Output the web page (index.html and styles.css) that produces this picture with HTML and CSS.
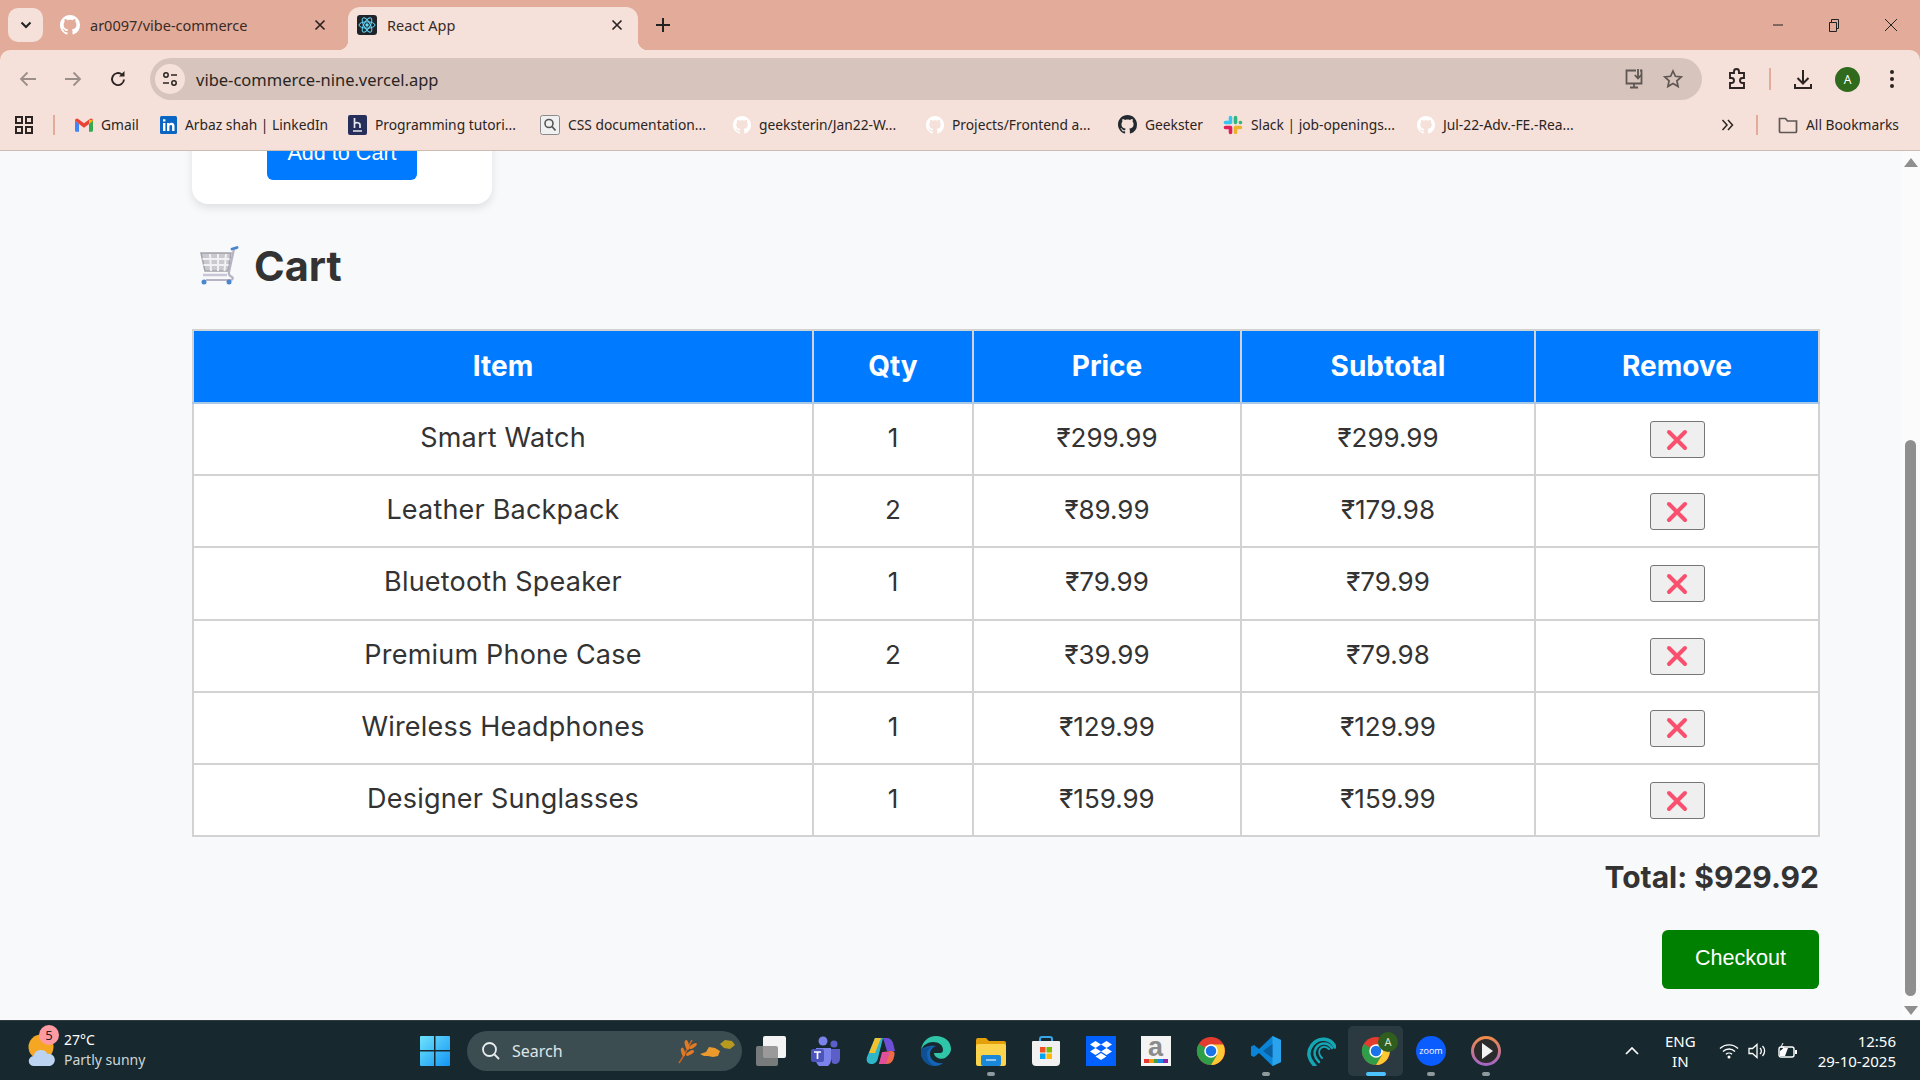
FILE: index.html
```html
<!DOCTYPE html>
<html lang="en">
  <head>
    <meta charset="UTF-8" />
    <title>React App</title>
    <link rel="stylesheet" href="styles.css">
  </head>
  <body>
    <svg class="defs" width="0" height="0">
      <symbol id="gh" viewBox="0 0 16 16"><path fill="currentColor" d="M8 0C3.58 0 0 3.58 0 8c0 3.54 2.29 6.53 5.47 7.59.4.07.55-.17.55-.38 0-.19-.01-.82-.01-1.49-2.01.37-2.53-.49-2.69-.94-.09-.23-.48-.94-.82-1.13-.28-.15-.68-.52-.01-.53.63-.01 1.08.58 1.23.82.72 1.21 1.87.87 2.33.66.07-.52.28-.87.51-1.07-1.78-.2-3.64-.89-3.64-3.95 0-.87.31-1.59.82-2.15-.08-.2-.36-1.02.08-2.12 0 0 .67-.21 2.2.82.64-.18 1.32-.27 2-.27s1.36.09 2 .27c1.53-1.04 2.2-.82 2.2-.82.44 1.1.16 1.92.08 2.12.51.56.82 1.27.82 2.15 0 3.07-1.87 3.75-3.65 3.95.29.25.54.73.54 1.48 0 1.07-.01 1.93-.01 2.2 0 .21.15.46.55.38A8.01 8.01 0 0 0 16 8c0-4.42-3.58-8-8-8z"/></symbol>
      <symbol id="remove" viewBox="0 0 22 22"><path d="M3 3l16 16M19 3L3 19" fill="none" stroke="#f9506f" stroke-width="4" stroke-linecap="round"/></symbol>
      <symbol id="close" viewBox="0 0 12 12"><path d="M1.5 1.5l9 9M10.500 1.500l-9 9" fill="none" stroke="currentColor" stroke-width="1.700"/></symbol>
      <symbol id="chrome" viewBox="0 0 32 32">
        <circle cx="16" cy="16" r="15" fill="#e33b2e"/>
        <path d="M16 16L3 8.500A15 15 0 0 0 16 31l6.500-11z" fill="#2e9e48"/>
        <path d="M16 9h13a15 15 0 0 1-13 22l6.500-11z" fill="#fcc934"/>
        <circle cx="16" cy="16" r="7.200" fill="#fff"/>
        <circle cx="16" cy="16" r="5.600" fill="#1a73e8"/>
      </symbol>
    </svg>

    <div class="window">
      <!-- Tabs -->
      <div class="tabstrip">
        <div class="tab-search">
          <svg width="12" height="8" viewBox="0 0 12 8"><path d="M1.500 1.500L6 6l4.500-4.500" fill="none" stroke="#222" stroke-width="2"/></svg>
        </div>
        <div class="tab tab-first">
          <svg class="tab-icon gh-white" width="20" height="20"><use href="#gh"/></svg>
          <span class="tab-title">ar0097/vibe-commerce</span>
          <svg class="tab-close" width="12" height="12"><use href="#close"/></svg>
        </div>
        <div class="tab tab-active">
          <svg class="tab-icon" width="20" height="20" viewBox="0 0 20 20">
            <rect width="20" height="20" rx="3" fill="#20232a"/>
            <g fill="none" stroke="#61dafb" stroke-width="1">
              <ellipse cx="10" cy="10" rx="8" ry="3.200"/>
              <ellipse cx="10" cy="10" rx="8" ry="3.200" transform="rotate(60 10 10)"/>
              <ellipse cx="10" cy="10" rx="8" ry="3.200" transform="rotate(120 10 10)"/>
            </g>
            <circle cx="10" cy="10" r="1.700" fill="#61dafb"/>
          </svg>
          <span class="tab-title">React App</span>
          <svg class="tab-close" width="12" height="12"><use href="#close"/></svg>
        </div>
        <svg class="new-tab" width="14" height="14" viewBox="0 0 14 14"><path d="M7 0v14M0 7h14" stroke="#222" stroke-width="2"/></svg>
        <div class="window-controls">
          <svg width="12" height="12" viewBox="0 0 12 12"><path d="M1 6h10" stroke="#222" stroke-width="1"/></svg>
          <svg width="14" height="14" viewBox="0 0 14 14"><path d="M2.500 4.500h7v9h-7zM4.500 4.500V1.500h7v9H9.500" fill="none" stroke="#222"/></svg>
          <svg width="14" height="14" viewBox="0 0 14 14"><path d="M1 1l12 12M13 1L1 13" stroke="#222" stroke-width="1"/></svg>
        </div>
      </div>

      <!-- Address bar -->
      <div class="toolbar">
        <svg class="nav-icon" width="18" height="16" viewBox="0 0 18 16"><path d="M17 8H2M8.500 1.500L2 8l6.500 6.500" fill="none" stroke="#9c8f8a" stroke-width="1.800"/></svg>
        <svg class="nav-icon" width="18" height="16" viewBox="0 0 18 16"><path d="M1 8h15M9.500 1.500L16 8l-6.500 6.500" fill="none" stroke="#9c8f8a" stroke-width="1.800"/></svg>
        <svg class="nav-icon" width="18" height="18" viewBox="0 0 18 18"><path d="M15 9.500A6 6 0 1 1 13 4.600" fill="none" stroke="#2b2422" stroke-width="1.900"/><path d="M15.500 1v5.500H10z" fill="#2b2422"/></svg>
        <div class="omnibox">
          <div class="site-info">
            <svg width="16" height="16" viewBox="0 0 16 16"><g fill="none" stroke="#2b2422" stroke-width="1.500"><circle cx="4" cy="4" r="2.200"/><path d="M9 4h6M1 12h6"/><circle cx="12" cy="12" r="2.200"/></g></svg>
          </div>
          <span class="url">vibe-commerce-nine.vercel.app</span>
          <svg class="omni-icon" width="22" height="22" viewBox="0 0 22 22"><path d="M13 2.500H3.500v13h15v-13H17M7 19.500h8M11 15.500v4" fill="none" stroke="#5f5754" stroke-width="1.800"/><path d="M15 1v9M11.800 7l3.200 3.400L18.200 7" fill="none" stroke="#5f5754" stroke-width="1.800"/></svg>
          <svg class="omni-icon" width="20" height="20" viewBox="0 0 20 20"><path d="M10 2l2.400 5.300 5.800.6-4.300 3.900 1.200 5.700L10 14.600l-5.100 2.900 1.200-5.700L1.800 7.900l5.800-.6z" fill="none" stroke="#5f5754" stroke-width="1.700"/></svg>
        </div>
        <svg class="tool-icon ext" width="20" height="22" viewBox="0 0 20 22"><path d="M3 5h4V3.500a2.500 2.500 0 0 1 5 0V5h5v5h-1.500a2.500 2.500 0 0 0 0 5H17v5H3v-5h1.500a2.500 2.500 0 0 0 0-5H3z" fill="none" stroke="#2b2422" stroke-width="1.900"/></svg>
        <span class="tool-divider"></span>
        <svg class="tool-icon dl" width="20" height="22" viewBox="0 0 20 22"><path d="M10 2v13M4.500 10l5.500 5.500 5.500-5.500M2 16v4h16v-4" fill="none" stroke="#2b2422" stroke-width="2"/></svg>
        <span class="avatar">A</span>
        <svg class="tool-icon menu" width="4" height="18" viewBox="0 0 4 18"><circle cx="2" cy="2" r="2" fill="#2b2422"/><circle cx="2" cy="9" r="2" fill="#2b2422"/><circle cx="2" cy="16" r="2" fill="#2b2422"/></svg>
      </div>

      <!-- Bookmarks -->
      <div class="bookmarks">
        <svg class="apps" width="18" height="18" viewBox="0 0 18 18"><g fill="none" stroke="#2b2422" stroke-width="2"><rect x="1" y="1" width="6" height="6"/><rect x="11" y="1" width="6" height="6"/><rect x="1" y="11" width="6" height="6"/><rect x="11" y="11" width="6" height="6"/></g></svg>
        <span class="bar-divider"></span>
        <div class="bookmark b-gmail">
          <svg width="18" height="14" viewBox="0 0 18 14"><path d="M0 2.500V12.500a1.200 1.200 0 0 0 1.200 1.200H4V6z" fill="#4285f4"/><path d="M18 2.500V12.500a1.200 1.200 0 0 1-1.200 1.200H14V6z" fill="#34a853"/><path d="M0 2.500a2 2 0 0 1 3.200-1.600L9 5.300l5.800-4.400A2 2 0 0 1 18 2.500L14 6V6L9 9.700 4 6z" fill="#ea4335"/><path d="M14 1.500L18 2.500 14 6z" fill="#fbbc04"/></svg>
          <span>Gmail</span>
        </div>
        <div class="bookmark b-linkedin">
          <svg width="17" height="18" viewBox="0 0 17 18"><rect width="17" height="18" rx="1.500" fill="#0a66c2"/><path d="M3 7h2.400v8H3zM3 3.200h2.400v2.300H3zM7 7h2.300v1.100c.5-.8 1.300-1.300 2.400-1.300 2 0 2.800 1.300 2.800 3.400V15h-2.400v-4.300c0-1-.3-1.700-1.200-1.700-1 0-1.500.7-1.500 1.800V15H7z" fill="#fff"/></svg>
          <span>Arbaz shah | LinkedIn</span>
        </div>
        <div class="bookmark b-hashnode">
          <svg width="19" height="20" viewBox="0 0 19 20"><rect width="19" height="20" rx="2" fill="#252f5a"/><path d="M6.500 3v10M6.500 8.500c1-1 5.500-1.500 5.500 1.500v3M5 16h9" fill="none" stroke="#e8e8ee" stroke-width="1.700"/></svg>
          <span>Programming tutori...</span>
        </div>
        <div class="bookmark b-css">
          <svg width="20" height="20" viewBox="0 0 20 20"><rect x=".5" y=".5" width="19" height="19" rx="2" fill="#f0f0f0" stroke="#8a8a8a"/><circle cx="9" cy="8.500" r="4" fill="none" stroke="#555" stroke-width="1.600"/><path d="M12 11.500l3.500 4" stroke="#555" stroke-width="1.800"/></svg>
          <span>CSS documentation...</span>
        </div>
        <div class="bookmark b-jan">
          <svg class="gh-white" width="18" height="18"><use href="#gh"/></svg>
          <span>geeksterin/Jan22-W...</span>
        </div>
        <div class="bookmark b-projects">
          <svg class="gh-white" width="18" height="18"><use href="#gh"/></svg>
          <span>Projects/Frontend a...</span>
        </div>
        <div class="bookmark b-geekster">
          <svg class="gh-dark" width="19" height="19"><use href="#gh"/></svg>
          <span>Geekster</span>
        </div>
        <div class="bookmark b-slack">
          <svg width="20" height="20" viewBox="0 0 20 20"><g stroke-width="3.600" stroke-linecap="round" fill="none"><path d="M7.500 2.500v5M2.500 7.500h5" stroke="#36c5f0"/><path d="M12.500 2.500v5M17.500 7.500h-.1" stroke="#2eb67d"/><path d="M12.500 12.500h5M12.500 17.500v-5" stroke="#ecb22e"/><path d="M7.500 17.500v-5M2.500 12.500h5" stroke="#e01e5a"/></g></svg>
          <span>Slack | job-openings...</span>
        </div>
        <div class="bookmark b-jul">
          <svg class="gh-white" width="18" height="18"><use href="#gh"/></svg>
          <span>Jul-22-Adv.-FE.-Rea...</span>
        </div>
        <svg class="more" width="13" height="12" viewBox="0 0 13 12"><path d="M1.500 1l4.500 5-4.500 5M7 1l4.500 5L7 11" fill="none" stroke="#2b2422" stroke-width="1.500"/></svg>
        <span class="bar-divider end"></span>
        <div class="bookmark all">
          <svg width="20" height="18" viewBox="0 0 20 18"><path d="M1.500 15.500v-13h6l2 2.500h9v10.500a1 1 0 0 1-1 1h-15a1 1 0 0 1-1-1z" fill="none" stroke="#5f5754" stroke-width="1.700"/></svg>
          <span>All Bookmarks</span>
        </div>
      </div>

      <!-- Page -->
      <div class="viewport">
        <main class="page">
          <div class="product-card">
            <button class="add-btn">Add to Cart</button>
          </div>

          <h2 class="cart-title">
            <svg width="40" height="40" viewBox="0 0 40 40">
              <path d="M2 7h30l-3 18H6z" fill="#c9c9cf" stroke="#a3a3aa" stroke-width="1.500"/>
              <g stroke="#f1f1f4" stroke-width="2" fill="none"><path d="M3.500 13h27M4.500 19h25M11 8l1 17M19 8v17M27 8l-1.500 17"/></g>
              <path d="M38 2l-3 1-5 23c-.500 2 .5 4 3 5 1.500 1 .5 3-1 3H7" fill="none" stroke="#b7b2c4" stroke-width="2.200"/>
              <path d="M33 3l5-1.500" stroke="#4a86d0" stroke-width="2.800" stroke-linecap="round"/>
              <path d="M4 29h24" stroke="#c9c4d6" stroke-width="2.500"/>
              <circle cx="5" cy="36" r="2.500" fill="#4a86d0"/><circle cx="30" cy="36" r="2.500" fill="#4a86d0"/>
            </svg>
            <span>Cart</span>
          </h2>

          <table class="cart-table">
            <colgroup>
              <col class="col-item"><col class="col-qty"><col class="col-price"><col class="col-sub"><col>
            </colgroup>
            <thead>
              <tr>
                <th>Item</th>
                <th>Qty</th>
                <th>Price</th>
                <th>Subtotal</th>
                <th>Remove</th>
              </tr>
            </thead>
            <tbody>
              <tr>
                <td class="item-name">Smart Watch</td><td>1</td><td>₹299.99</td><td>₹299.99</td>
                <td><button class="remove-btn"><svg width="22" height="22"><use href="#remove"/></svg></button></td>
              </tr>
              <tr>
                <td class="item-name">Leather Backpack</td><td>2</td><td>₹89.99</td><td>₹179.98</td>
                <td><button class="remove-btn"><svg width="22" height="22"><use href="#remove"/></svg></button></td>
              </tr>
              <tr>
                <td class="item-name">Bluetooth Speaker</td><td>1</td><td>₹79.99</td><td>₹79.99</td>
                <td><button class="remove-btn"><svg width="22" height="22"><use href="#remove"/></svg></button></td>
              </tr>
              <tr>
                <td class="item-name">Premium Phone Case</td><td>2</td><td>₹39.99</td><td>₹79.98</td>
                <td><button class="remove-btn"><svg width="22" height="22"><use href="#remove"/></svg></button></td>
              </tr>
              <tr>
                <td class="item-name">Wireless Headphones</td><td>1</td><td>₹129.99</td><td>₹129.99</td>
                <td><button class="remove-btn"><svg width="22" height="22"><use href="#remove"/></svg></button></td>
              </tr>
              <tr>
                <td class="item-name">Designer Sunglasses</td><td>1</td><td>₹159.99</td><td>₹159.99</td>
                <td><button class="remove-btn"><svg width="22" height="22"><use href="#remove"/></svg></button></td>
              </tr>
            </tbody>
          </table>

          <div class="cart-footer">
            <div class="total">Total: $929.92</div>
            <button class="checkout-btn">Checkout</button>
          </div>
        </main>

        <div class="scrollbar">
          <svg width="14" height="9" viewBox="0 0 14 9"><path d="M7 0l7 9H0z" fill="#8f8f8f"/></svg>
          <div class="scroll-track"><div class="scroll-thumb"></div></div>
          <svg width="14" height="9" viewBox="0 0 14 9"><path d="M7 9L0 0h14z" fill="#8f8f8f"/></svg>
        </div>
      </div>

      <!-- Taskbar -->
      <footer class="taskbar">
        <div class="weather">
          <div class="weather-icon">
            <svg width="28" height="36" viewBox="0 0 28 36">
              <circle cx="13" cy="14" r="12.500" fill="#f5a623"/>
              <path d="M6 33a5 5 0 0 1-.5-10 7.500 7.500 0 0 1 14-2 6 6 0 0 1 2.500 12z" fill="#bcd4f2"/>
            </svg>
            <span class="weather-badge">5</span>
          </div>
          <div class="weather-text">
            <span class="temp">27°C</span>
            <span class="cond">Partly sunny</span>
          </div>
        </div>

        <svg class="win-logo" width="30" height="30" viewBox="0 0 30 30">
          <defs><linearGradient id="wing" x1="0" y1="0" x2="1" y2="1"><stop offset="0" stop-color="#6fe3fb"/><stop offset="1" stop-color="#1394f5"/></linearGradient></defs>
          <path d="M0 1a1 1 0 0 1 1-1h13v14H0zM15.500 0H29a1 1 0 0 1 1 1v13H15.500zM0 15.500h14V30H1a1 1 0 0 1-1-1zM15.500 15.500H30V29a1 1 0 0 1-1 1H15.500z" fill="url(#wing)"/>
        </svg>

        <div class="search">
          <svg width="20" height="20" viewBox="0 0 20 20"><circle cx="8.500" cy="8.500" r="6.500" fill="none" stroke="#e8eeee" stroke-width="1.800"/><path d="M13.500 13.500L18 18" stroke="#e8eeee" stroke-width="1.800"/></svg>
          <span>Search</span>
          <svg class="leaves" width="58" height="26" viewBox="0 0 58 26">
            <path d="M1 25C6 18 10 10 14 2" stroke="#d9641e" stroke-width="1.500" fill="none"/>
            <g fill="#e07a24"><ellipse cx="9" cy="7" rx="2" ry="5" transform="rotate(-15 9 7)"/><ellipse cx="15" cy="8" rx="4.500" ry="1.800" transform="rotate(-35 15 8)"/><ellipse cx="5" cy="14" rx="1.800" ry="4.500" transform="rotate(-15 5 14)"/><ellipse cx="12" cy="15" rx="4.500" ry="1.800" transform="rotate(-30 12 15)"/></g>
            <path d="M22 16l6-2 3-5 6 1 5 3-2 5-5 1-5-1-4 0z" fill="#ec9a2c"/>
            <path d="M42 6l5-4 7 1 3 4-5 4-6-1z" fill="#b89a1e"/>
          </svg>
        </div>

        <div class="apps-row">
          <div class="app">
            <svg width="30" height="30" viewBox="0 0 30 30"><rect x="7" y="0" width="23" height="22" rx="2" fill="#f4f4f4"/><rect x="0" y="10" width="22" height="20" rx="2" fill="#8a8a8a" fill-opacity=".85"/></svg>
          </div>
          <div class="app">
            <svg width="30" height="30" viewBox="0 0 30 30"><circle cx="12" cy="5" r="4.500" fill="#7b83eb"/><circle cx="23" cy="8" r="3.500" fill="#5b5fc7"/><path d="M18 13h11v10a5 5 0 0 1-8 4z" fill="#5b5fc7"/><path d="M5 12h15v12a7.500 7.500 0 0 1-15 0z" fill="#7b83eb"/><rect x="0" y="13" width="13" height="13" rx="2" fill="#4b53bc"/><path d="M3 16h7M6.500 16v7" stroke="#fff" stroke-width="1.700"/></svg>
          </div>
          <div class="app">
            <svg width="30" height="30" viewBox="0 0 30 30"><path d="M9 2h8l-5 20c-1 4-3 6-7 6-4 0-5-4-4-7z" fill="#2fb7c9"/><path d="M9 2h6L9 17H3z" fill="#f2c12e"/><path d="M13 28h8c4 0 6-3 7-7 1-4 1-6-3-6l-8 1z" fill="#f06a47"/><path d="M17 2h4c3 0 5 2 6 5l2 8h-8z" fill="#6d4fd8"/><path d="M16 16h8l-4 12h-7z" fill="#e04f9a"/></svg>
          </div>
          <div class="app">
            <svg width="30" height="30" viewBox="0 0 30 30"><path d="M15 0C7 0 1 6 0 14c2-5 7-8 12-8 6 0 10 3 10 8 0 2-1 3-3 3h-6c0 5 8 7 11 5 3-2 6-5 6-9C30 5 23 0 15 0z" fill="#2fc5a8"/><path d="M0 14c-1 8 5 16 14 16 3 0 6-1 8-3-7 1-13-3-13-9 0-4 3-7 6-8-7-1-13 2-15 4z" fill="#1565b5"/><path d="M14 30c-5-2-8-7-8-12 0-3 2-6 5-7-5 0-9 2-11 3-1 8 5 16 14 16z" fill="#0f4f94"/></svg>
          </div>
          <div class="app has-dot">
            <svg width="30" height="30" viewBox="0 0 30 30"><path d="M0 4a2 2 0 0 1 2-2h8l3 3h15a2 2 0 0 1 2 2v5H0z" fill="#e3a008"/><rect y="8" width="30" height="22" rx="2" fill="#fcd34d"/><rect x="5" y="19" width="20" height="11" rx="2" fill="#1b87d8"/><path d="M10 24h10" stroke="#fff" stroke-opacity=".7" stroke-width="1.500"/></svg>
            <span class="dot"></span>
          </div>
          <div class="app">
            <svg width="30" height="30" viewBox="0 0 30 30"><path d="M9 6V3a2 2 0 0 1 2-2h8a2 2 0 0 1 2 2v3" fill="none" stroke="#37a6e8" stroke-width="2"/><path d="M2 5h26a1 1 0 0 1 1 1v20a4 4 0 0 1-4 4H5a4 4 0 0 1-4-4V6a1 1 0 0 1 1-1z" fill="#f1f1f1"/><rect x="9" y="11" width="5.500" height="5.500" fill="#f25022"/><rect x="15.500" y="11" width="5.500" height="5.500" fill="#7fba00"/><rect x="9" y="17.500" width="5.500" height="5.500" fill="#00a4ef"/><rect x="15.500" y="17.500" width="5.500" height="5.500" fill="#ffb900"/></svg>
          </div>
          <div class="app">
            <svg width="30" height="30" viewBox="0 0 30 30"><rect width="30" height="30" fill="#0061fe"/><path d="M9.500 5L15 8.500 9.500 12 4 8.500zM20.500 5L26 8.500 20.500 12 15 8.500zM9.500 12L15 15.500 9.500 19 4 15.500zM20.500 12L26 15.500 20.500 19 15 15.500zM15 17l5.500 3.500L15 24l-5.500-3.500z" fill="#fff"/></svg>
          </div>
          <div class="app">
            <div class="amazon">a<span class="amazon-dots"></span></div>
          </div>
          <div class="app">
            <svg width="30" height="30"><use href="#chrome"/></svg>
          </div>
          <div class="app has-dot">
            <svg width="30" height="30" viewBox="0 0 30 30"><path d="M21.500 0L30 4v22l-8.500 4L8 17l-5 4-3-1.500v-9L3 9l5 4z" fill="#0a84d6"/><path d="M21.500 0L30 4v22l-8.500 4z" fill="#2aa3ec"/><path d="M21.500 8L12 15l9.500 7z" fill="#0c5f9e"/></svg>
            <span class="dot"></span>
          </div>
          <div class="app">
            <svg width="30" height="30" viewBox="0 0 30 30"><g fill="none" stroke="#14a6b4" stroke-linecap="round"><path d="M29 11C25 2 13 0 6 9c-5 7-4 13 3 21" stroke-width="3.500"/><path d="M26 12C22 6 14 6 10 12c-3 5-1 10 3 14" stroke-width="2.500"/><path d="M23 13c-3-3-7-3-9 0-2 3 0 7 2 9" stroke-width="2"/></g></svg>
          </div>
          <div class="app app-active">
            <svg width="30" height="30"><use href="#chrome"/></svg>
            <span class="app-badge">A</span>
            <span class="dot dot-active"></span>
          </div>
          <div class="app has-dot">
            <svg width="30" height="30" viewBox="0 0 30 30"><circle cx="15" cy="15" r="15" fill="#0b5cff"/><text x="15" y="18" text-anchor="middle" class="zoom-text">zoom</text></svg>
            <span class="dot"></span>
          </div>
          <div class="app has-dot">
            <svg width="30" height="30" viewBox="0 0 30 30"><defs><linearGradient id="ring" x1="0" y1="0" x2="0" y2="1"><stop offset="0" stop-color="#f08a4b"/><stop offset="1" stop-color="#a566c8"/></linearGradient></defs><circle cx="15" cy="15" r="13.500" fill="#2b2b2b" stroke="url(#ring)" stroke-width="3"/><path d="M11 7l11 8-11 8z" fill="#f2f2f2"/></svg>
            <span class="dot"></span>
          </div>
        </div>

        <div class="tray">
          <svg class="tray-up" width="14" height="8" viewBox="0 0 14 8"><path d="M1 7l6-6 6 6" fill="none" stroke="#fff" stroke-width="1.700"/></svg>
          <div class="lang"><span>ENG</span><span>IN</span></div>
          <svg class="tray-wifi" width="20" height="16" viewBox="0 0 20 16"><g fill="none" stroke="#fff" stroke-width="1.400"><path d="M1 5.500a13 13 0 0 1 18 0"/><path d="M4 8.500a8.500 8.500 0 0 1 12 0"/><path d="M7 11.300a4.300 4.300 0 0 1 6 0"/></g><circle cx="10" cy="14" r="1.500" fill="#fff"/></svg>
          <svg class="tray-sound" width="20" height="16" viewBox="0 0 20 16"><path d="M1 5.500h3.500L9 1.500v13l-4.500-4H1z" fill="none" stroke="#fff" stroke-width="1.300"/><path d="M12 5a4 4 0 0 1 0 6M14.500 3a7 7 0 0 1 0 10" fill="none" stroke="#fff" stroke-width="1.300"/></svg>
          <svg class="tray-batt" width="20" height="16" viewBox="0 0 20 16"><rect x="1" y="4" width="15" height="10" rx="2" fill="none" stroke="#fff" stroke-width="1.400"/><rect x="17" y="7" width="2" height="4" fill="#fff"/><path d="M2 13V8l4-3h4L7 13z" fill="#fff"/><path d="M5 0L3 4h3L4.500 7.500" fill="none" stroke="#fff"/></svg>
          <div class="clock"><span>12:56</span><span>29-10-2025</span></div>
        </div>
      </footer>
    </div>
  </body>
</html>
```

FILE: styles.css
```css
* {
  box-sizing: border-box;
}

html,
body {
  margin: 0;
  padding: 0;
  height: 100%;
  overflow: hidden;
}

body {
  font-family: "Noto Sans", "Open Sans", sans-serif;
  background-color: #f8f9fa;
}

.defs {
  display: block;
  height: 0;
}

.window {
  display: flex;
  flex-direction: column;
  width: 1920px;
  height: 1080px;
  background-color: #e3ab99;
}

/* Tabs */
.tabstrip {
  display: flex;
  align-items: flex-end;
  height: 50px;
  flex-shrink: 0;
  padding-left: 8px;
}

.tab-search {
  display: flex;
  align-items: center;
  justify-content: center;
  width: 35px;
  height: 34px;
  margin-bottom: 8px;
  border-radius: 10px;
  background-color: #f5e1da;
}

.tab {
  display: flex;
  align-items: center;
  height: 43px;
  padding: 0 12px 8px 10px;
  color: #3a2c27;
  font-size: 14.500px;
}

.tab-first {
  width: 305px;
  padding-left: 17px;
  padding-right: 19px;
}

.tab-icon {
  margin-right: 10px;
  flex-shrink: 0;
}

.gh-white {
  color: #fff;
}

.gh-dark {
  color: #24292f;
}

.tab-title {
  flex: 1;
  white-space: nowrap;
}

.tab-close {
  color: #2b2422;
  margin-right: 3px;
}

.tab-active {
  position: relative;
  width: 290px;
  padding-left: 9px;
  border-radius: 12px 12px 0 0;
  background-color: #f5e1da;
}

.tab-active::before,
.tab-active::after {
  content: "";
  position: absolute;
  bottom: 0;
  width: 10px;
  height: 10px;
}

.tab-active::before {
  left: -10px;
  background: radial-gradient(circle at 0 0, transparent 10px, #f5e1da 10.500px);
}

.tab-active::after {
  right: -10px;
  background: radial-gradient(circle at 100% 0, transparent 10px, #f5e1da 10.500px);
}

.new-tab {
  margin: 0 0 18px 18px;
}

.window-controls {
  display: flex;
  align-items: center;
  gap: 43px;
  margin-left: auto;
  padding-right: 22px;
  margin-bottom: 18px;
}

/* Address bar */
.toolbar {
  display: flex;
  align-items: center;
  height: 55px;
  flex-shrink: 0;
  padding: 3px 0 0 19px;
  border-radius: 10px 10px 0 0;
  background-color: #f5e1da;
}

.nav-icon {
  flex-shrink: 0;
  margin-right: 27px;
}

.nav-icon:nth-child(3) {
  margin-right: 23px;
}

.omnibox {
  display: flex;
  align-items: center;
  width: 1552px;
  height: 42px;
  padding: 0 19px 0 5px;
  border-radius: 21px;
  background-color: #d7c5bd;
}

.site-info {
  display: flex;
  align-items: center;
  justify-content: center;
  width: 30px;
  height: 30px;
  margin-right: 11px;
  border-radius: 50%;
  background-color: #f5e1da;
}

.url {
  flex: 1;
  color: #2b2422;
  font-size: 16.500px;
}

.omni-icon {
  margin-left: 18px;
}

.tool-icon {
  flex-shrink: 0;
}

.ext {
  margin-left: 25px;
}

.tool-divider {
  width: 2px;
  height: 22px;
  margin: 0 22px 0 22px;
  background-color: #e3ab99;
}

.avatar {
  display: flex;
  align-items: center;
  justify-content: center;
  flex-shrink: 0;
  width: 25px;
  height: 25px;
  margin: 0 30px 0 22px;
  border-radius: 50%;
  background-color: #2f6a1d;
  color: #fff;
  font-size: 12px;
}

/* Bookmarks */
.bookmarks {
  display: flex;
  align-items: center;
  height: 46px;
  flex-shrink: 0;
  padding: 0 0 6px 15px;
  border-bottom: 1px solid #cdbcb4;
  background-color: #f5e1da;
  color: #2b2422;
  font-size: 13.800px;
}

.apps {
  flex-shrink: 0;
}

.bar-divider {
  width: 2px;
  height: 20px;
  margin: 0 20px 0 20px;
  background-color: #e3ab99;
  flex-shrink: 0;
}

.bar-divider.end {
  margin: 0 20px 0 22px;
}

.bookmark {
  display: flex;
  align-items: center;
  gap: 8px;
  flex-shrink: 0;
  white-space: nowrap;
}

.b-gmail { width: 85px; }
.b-linkedin { width: 188px; }
.b-hashnode { width: 192px; }
.b-css { width: 193px; }
.b-jan { width: 193px; }
.b-projects { width: 192px; }
.b-geekster { width: 105px; }
.b-slack { width: 194px; }
.b-jul { width: 304px; }

/* Page */
.viewport {
  display: flex;
  flex: 1;
  min-height: 0;
  background-color: #f8f9fa;
}

.page {
  flex: 1;
  min-width: 0;
  overflow: hidden;
  padding: 0 82px 0 192px;
  color: #333;
}

.product-card {
  width: 300px;
  margin-top: -26px;
  padding: 0 75px 24px;
  border-radius: 16px;
  background-color: #fff;
  box-shadow: 0 4px 8px rgba(0, 0, 0, 0.1);
}

button {
  font-family: "Liberation Sans", Arial, sans-serif;
}

.add-btn,
.checkout-btn {
  border: none;
  border-radius: 6px;
  color: #fff;
  font-size: 21.600px;
}

.add-btn {
  width: 150px;
  height: 55px;
  background-color: #007bff;
}

.cart-title {
  display: flex;
  align-items: center;
  gap: 15px;
  height: 48px;
  margin: 38px 0 39px;
  padding-left: 7px;
  font-family: Inter, sans-serif;
  font-size: 41.500px;
  font-weight: 700;
  line-height: 48px;
}

.cart-table {
  width: 1628px;
  table-layout: fixed;
  border-collapse: collapse;
  background-color: #fff;
  font-family: Inter, sans-serif;
  text-align: center;
}

.col-item { width: 620px; }
.col-qty { width: 160px; }
.col-price { width: 268px; }
.col-sub { width: 294px; }

.cart-table th,
.cart-table td {
  padding: 0;
  border: 2px solid #d2d2d2;
}

.cart-table th {
  height: 73px;
  padding-bottom: 1px;
  border-bottom-color: #a9c7e6;
  background-color: #007bff;
  color: #fff;
  font-size: 28px;
  font-weight: 700;
}

.cart-table td {
  height: 72.200px;
  padding-bottom: 3px;
  font-size: 26px;
  font-weight: 400;
}

.cart-table .item-name {
  font-size: 27px;
  letter-spacing: 0.2px;
}

.remove-btn {
  display: inline-flex;
  align-items: center;
  justify-content: center;
  width: 55px;
  height: 37px;
  padding: 0;
  margin-top: 4px;
  border: 1px solid #767676;
  border-radius: 3px;
  background-color: #efefef;
  vertical-align: middle;
}

.cart-footer {
  display: flex;
  flex-direction: column;
  align-items: flex-end;
  padding-top: 16px;
}

.total {
  height: 48px;
  font-family: Inter, sans-serif;
  font-size: 30px;
  font-weight: 700;
  line-height: 48px;
}

.checkout-btn {
  width: 157px;
  height: 59px;
  margin-top: 29px;
  padding-bottom: 4px;
  background-color: #008000;
}

/* Scrollbar */
.scrollbar {
  display: flex;
  flex-direction: column;
  align-items: center;
  justify-content: space-between;
  width: 19px;
  padding: 7px 0 5px;
  background-color: #fbfbfb;
}

.scroll-track {
  flex: 1;
  width: 11px;
  padding: 273px 0 10px;
}

.scroll-thumb {
  height: 100%;
  border-radius: 6px;
  background-color: #8f8f8f;
}

/* Taskbar */
.taskbar {
  display: flex;
  align-items: center;
  height: 60px;
  flex-shrink: 0;
  border-top: 1px solid #2f3b40;
  background-color: #17292f;
  color: #fff;
}

.weather {
  display: flex;
  align-items: center;
  gap: 8px;
  width: 420px;
  padding-left: 28px;
}

.weather-icon {
  position: relative;
  height: 36px;
}

.weather-badge {
  position: absolute;
  top: -8px;
  left: 11px;
  width: 20px;
  height: 20px;
  border-radius: 50%;
  background-color: #ff9aa2;
  color: #222;
  font-size: 13px;
  line-height: 20px;
  text-align: center;
}

.weather-text {
  display: flex;
  flex-direction: column;
  margin-top: -2px;
  font-size: 14px;
  line-height: 20px;
}

.cond {
  color: #cfd6d8;
}

.win-logo {
  flex-shrink: 0;
}

.search {
  display: flex;
  align-items: center;
  gap: 11px;
  width: 275px;
  height: 40px;
  margin-left: 17px;
  padding: 0 6px 0 14px;
  border-radius: 20px;
  background-color: #3c4d52;
  color: #dfe5e6;
  font-size: 16px;
}

.leaves {
  margin-left: auto;
}

.apps-row {
  display: flex;
  align-items: center;
  margin-left: 1px;
}

.app {
  position: relative;
  display: flex;
  align-items: center;
  justify-content: center;
  width: 55px;
  height: 50px;
}

.dot {
  position: absolute;
  left: 50%;
  bottom: 0;
  width: 8px;
  height: 4px;
  margin-left: -4px;
  border-radius: 2px;
  background-color: #8e9a9e;
}

.app-active {
  border-radius: 5px;
  background-color: #2a3a40;
}

.dot-active {
  width: 20px;
  margin-left: -10px;
  background-color: #4cc2ff;
}

.app-badge {
  position: absolute;
  top: 6px;
  right: 5px;
  width: 20px;
  height: 20px;
  border-radius: 50%;
  background-color: #2f5e1f;
  color: #d8e6d2;
  font-size: 11px;
  line-height: 20px;
  text-align: center;
}

.amazon {
  position: relative;
  width: 30px;
  height: 30px;
  background-color: #f4f4f4;
  color: #8c8c8c;
  font-family: "Liberation Sans", sans-serif;
  font-size: 27px;
  font-weight: 700;
  line-height: 23px;
  text-align: center;
}

.amazon-dots {
  position: absolute;
  left: 3px;
  right: 3px;
  bottom: 3px;
  height: 4px;
  background: linear-gradient(90deg, #e53935 20%, #f39c12 20% 40%, #43a047 40% 60%, #1e88e5 60% 80%, #8e24aa 80%);
}

.zoom-text {
  fill: #fff;
  font-family: "Open Sans", sans-serif;
  font-size: 9px;
}

.tray {
  display: flex;
  align-items: center;
  margin-left: auto;
  padding-right: 24px;
  font-size: 15px;
}

.tray-up {
  margin-right: 26px;
}

.lang,
.clock {
  display: flex;
  flex-direction: column;
  line-height: 20px;
}

.lang {
  align-items: center;
  margin-right: 23px;
}

.tray-sound {
  margin-left: 9px;
}

.tray-batt {
  margin-left: 10px;
}

.clock {
  align-items: flex-end;
  margin-left: 20px;
}
```
